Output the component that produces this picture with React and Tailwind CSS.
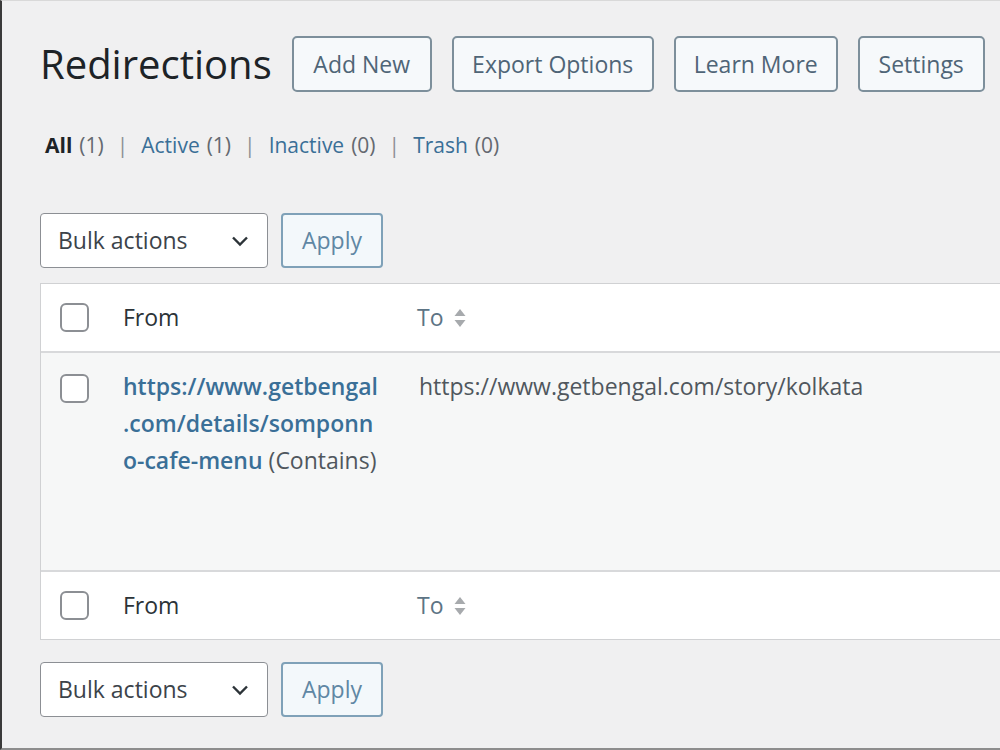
import React from 'react'

const font = { fontFamily: '"Open Sans", "Noto Sans", sans-serif' }

function Checkbox() {
  return <span className="block h-[29px] w-[29px] rounded-[6px] border-2 border-[#8c8f94] bg-white" />
}

function SortIcon() {
  return (
    <svg width="14" height="22" viewBox="0 0 14 22" className="ml-[9px]">
      <path d="M7 2 L12.5 9 H1.5 Z" fill="#a7aaad" />
      <path d="M7 20 L12.5 13 H1.5 Z" fill="#a7aaad" />
    </svg>
  )
}

function Chevron() {
  return (
    <svg width="20" height="12" viewBox="0 0 20 12">
      <path d="M3 2.5 L10 9.5 L17 2.5" fill="none" stroke="#2c3338" strokeWidth="2.4" />
    </svg>
  )
}

function BulkRow() {
  return (
    <div className="flex items-center gap-[13px]">
      <div className="flex h-[55px] w-[228px] items-center justify-between rounded-[4px] border border-[#8c8f94] bg-white pl-[17px] pr-[17px] text-[23px] text-[#3c434a]">
        <span>Bulk actions</span>
        <Chevron />
      </div>
      <button className="h-[55px] w-[102px] rounded-[4px] border-2 border-[#7fa1b8] bg-[#f3f8fb] text-[23px] text-[#5f87a4]">
        Apply
      </button>
    </div>
  )
}

function HeadRow({ top }) {
  return (
    <div className={`grid h-[69px] grid-cols-[82px_294px_1fr] items-center bg-white ${top ? 'border-b-2' : 'border-t-2'} border-[#d8d9db]`}>
      <div className="pl-[19px]">
        <Checkbox />
      </div>
      <div className="text-[23px] text-[#2c3338]">From</div>
      <div className="flex items-center text-[23px] text-[#5d7485]">
        To
        <SortIcon />
      </div>
    </div>
  )
}

export default function App() {
  const buttons = [
    ['Add New', 'w-[140px]'],
    ['Export Options', 'w-[202px]'],
    ['Learn More', 'w-[164px]'],
    ['Settings', 'w-[127px]'],
  ]

  return (
    <div
      style={font}
      className="h-[750px] w-[1000px] overflow-hidden border-b-2 border-l-2 border-t border-b-[#8d8d8d] border-l-[#3a3a3a] border-t-[#d9d9d9] bg-[#f0f0f1] pl-[38px] pt-[35px]"
    >
      <div className="flex items-center">
        <h1 className="mr-[20px] text-[40px] leading-none text-[#1d2327]">Redirections</h1>
        <div className="flex gap-[20px]">
          {buttons.map(([label, w]) => (
            <button
              key={label}
              className={`${w} h-[56px] rounded-[5px] border-2 border-[#7d8f9b] bg-[#f6f9fb] text-[23px] text-[#4f6577]`}
            >
              {label}
            </button>
          ))}
        </div>
      </div>

      <div className="mt-[43px] flex items-center text-[21px] leading-none text-[#646970]">
        <span className="ml-[5px] font-bold text-[#1d2327]">All</span>
        <span className="ml-[7px]">(1)</span>
        <span className="mx-[13px] text-[#8c8f94]">|</span>
        <span className="text-[#3a6f97]">Active</span>
        <span className="ml-[7px]">(1)</span>
        <span className="mx-[13px] text-[#8c8f94]">|</span>
        <span className="text-[#3a6f97]">Inactive</span>
        <span className="ml-[7px]">(0)</span>
        <span className="mx-[13px] text-[#8c8f94]">|</span>
        <span className="text-[#3a6f97]">Trash</span>
        <span className="ml-[7px]">(0)</span>
      </div>

      <div className="mt-[57px]">
        <BulkRow />
      </div>

      <div className="mt-[15px] w-[990px] border border-r-0 border-[#d0d1d3] bg-white">
        <HeadRow top />
        <div className="grid h-[217px] grid-cols-[82px_294px_1fr] bg-[#f6f7f7] pt-[17px] text-[23px] leading-[37px]">
          <div className="pl-[19px] pt-[4px]">
            <Checkbox />
          </div>
          <div className="-mt-[2px] whitespace-nowrap">
            <span className="block font-semibold text-[#3a6f97]">https://www.getbengal</span>
            <span className="block font-semibold text-[#3a6f97]">.com/details/somponn</span>
            <span className="block">
              <span className="font-semibold text-[#3a6f97]">o-cafe-menu</span>{' '}
              <span className="text-[#50575e]">(Contains)</span>
            </span>
          </div>
          <div className="-mt-[2px] pl-[2px] text-[#50575e]">https://www.getbengal.com/story/kolkata</div>
        </div>
        <HeadRow />
      </div>

      <div className="mt-[22px]">
        <BulkRow />
      </div>
    </div>
  )
}
